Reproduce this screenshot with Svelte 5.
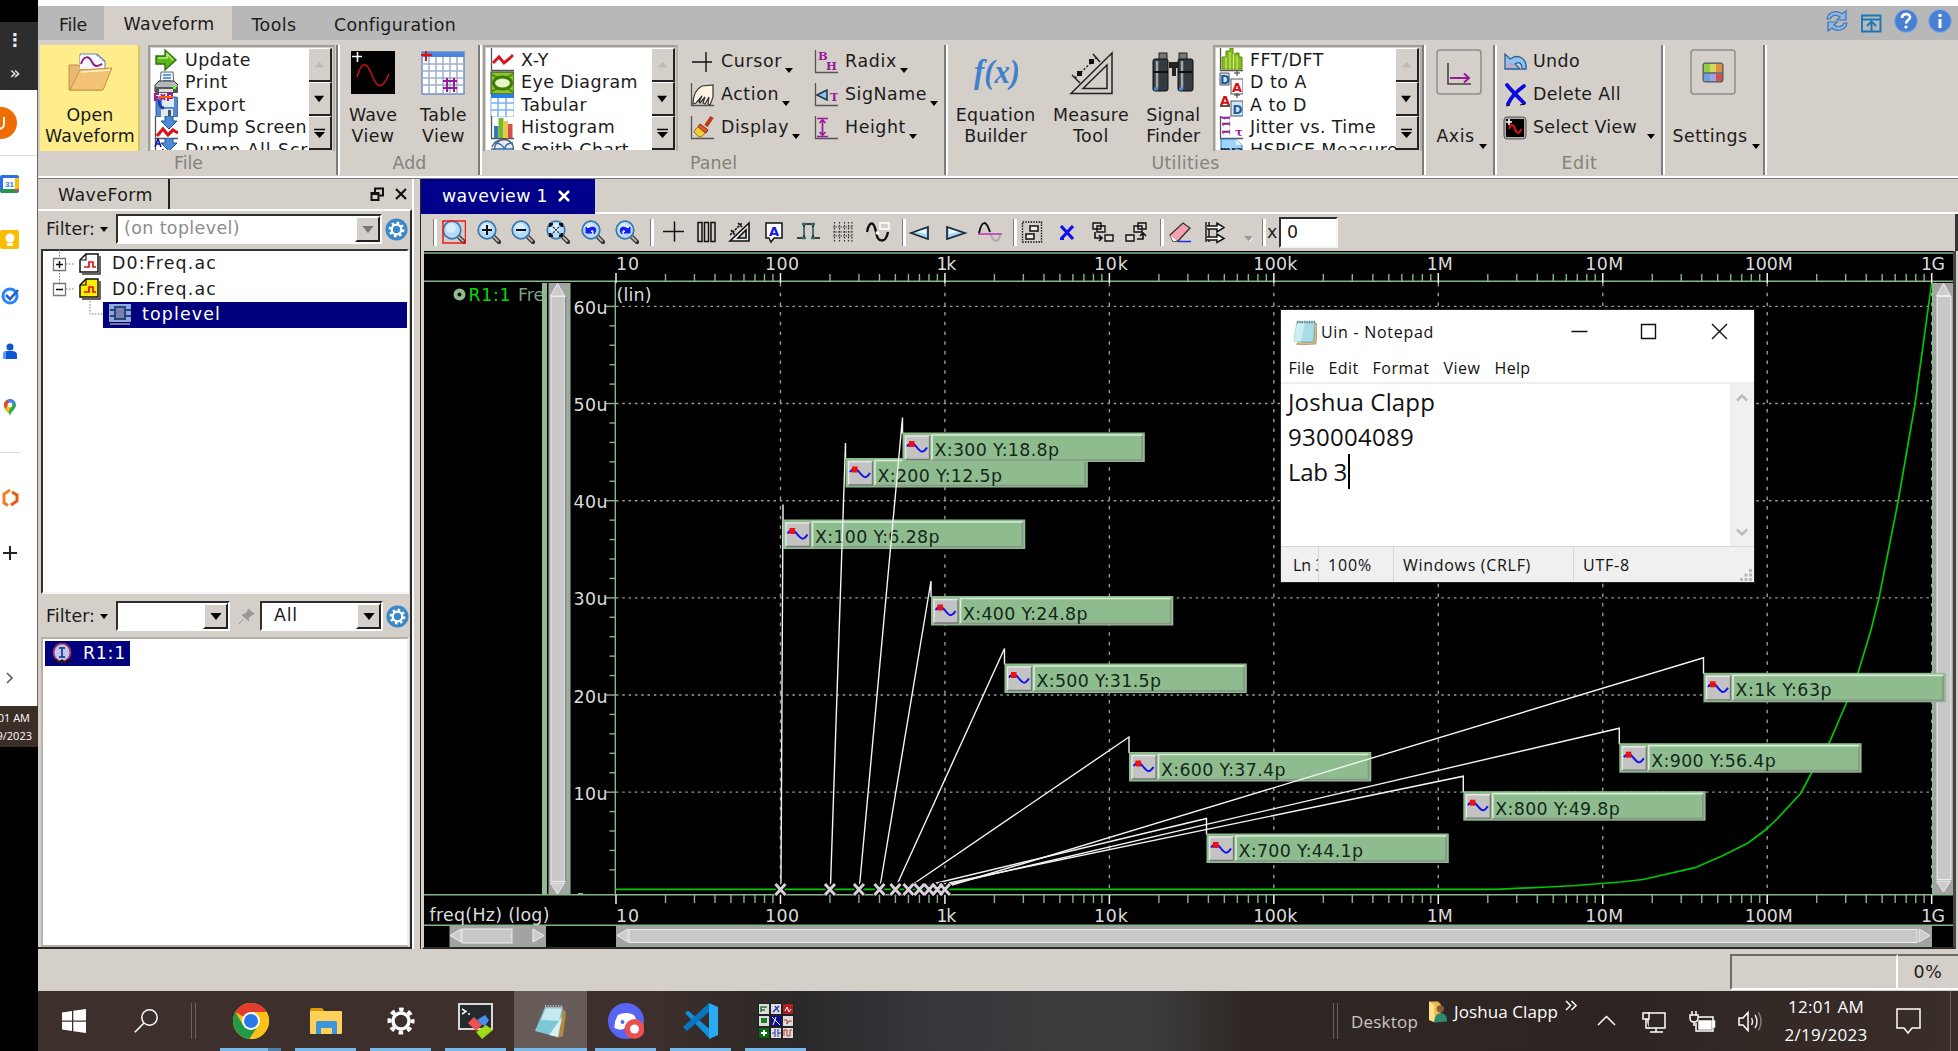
<script>
  // Stretches or tightens a label's tracking so that it fills the given width.
  function fit(node, width) {
    if (!width) return;
    const natural = node.getBoundingClientRect().width;
    node.style.letterSpacing = (width - natural) / node.textContent.length + 'px';
  }

  const axes = '<path d="M1.5 0V22.5H24" fill="none" stroke="#555" stroke-width="1.3"/>';
  const lens = '<path d="M15 15l7 7" stroke="#333" stroke-width="4.4" stroke-linecap="round"/><path d="M15 15l6.5 6.5" stroke="#b5b5b5" stroke-width="1.8"/><circle cx="10" cy="10" r="8.8" fill="#b4dcfa" stroke="#3c78ae" stroke-width="1.7"/><circle cx="9" cy="8" r="5" fill="#d8eefe"/>';
  const icons = {
    update: '<path d="M2 8h9V2l11 10-11 10v-6H2z" fill="#5cb81c" stroke="#2f6d0c" stroke-width="1.4"/><path d="M4 10h9V6l6 6" fill="none" stroke="#b4ec76" stroke-width="1.6"/>',
    print: '<path d="M6 13L7 1h12l1 12z" fill="#e8f3fb" stroke="#667" /><path d="M9 4h8M9 7h8M9 10h8" stroke="#3f7fbf" stroke-width="1.6"/><path d="M1 14l4-4h15l4 4v7H1z" fill="#b5b8b8" stroke="#333"/><rect x="1" y="16" width="23" height="6" rx="1" fill="#555"/><rect x="5" y="18" width="14" height="3" fill="#ddd"/><rect x="19" y="15" width="3" height="3" fill="#6f2"/>',
    export: '<rect x="2" y="4" width="22" height="20" rx="2" fill="#5588cf" stroke="#2d5a9b"/><rect x="8" y="5" width="12" height="9" fill="#dcebf7"/><rect x="7" y="16" width="12" height="8" fill="#e8e8e8"/><rect x="14" y="17" width="3" height="6" fill="#357"/><path d="M5 7c0 6 2 8 5 8" fill="none" stroke="#1c3fb0" stroke-width="3"/><path d="M0 1h5M0 4h4M0 7h5M1 1v6M7 1l4 6M11 1L7 7M14 8V1h4v4h-4" fill="none" stroke="#a0189a" stroke-width="2"/><path d="M5 4h14" stroke="#f60" stroke-width="2"/>',
    dump: axes + '<path d="M3 20l6-7 5 6 5-5 5 3" fill="none" stroke="#d8141c" stroke-width="3.2"/><path d="M11 0h8v5h4l-8 8-8-8h4z" fill="#4b8ad6" stroke="#1f5394"/>',
    dumpall: axes + '<path d="M3 20l6-7 5 6 5-5 5 3" fill="none" stroke="#d8141c" stroke-width="3.2"/><path d="M11 0h8v5h4l-8 8-8-8h4z" fill="#4b8ad6" stroke="#1f5394"/><path d="M1 9L4 1l3 8M2 6h4" fill="none" stroke="#1414a0" stroke-width="1.6"/>',
    xy: axes + '<path d="M3 13l6-6 5 6 5-4 4-4" transform="translate(0 2)" fill="none" stroke="#d8141c" stroke-width="3"/>',
    eye: '<rect x="1" y="1" width="23" height="22" fill="#8ac72c" stroke="#333"/><path d="M1 3l5 3h12l5-3M1 21l5-3h12l5 3" stroke="#4c8d08" stroke-width="2" fill="none"/><ellipse cx="12.5" cy="12" rx="9" ry="6" fill="#e5f5c4" stroke="#3f7c05" stroke-width="3"/>',
    tabular: '<path d="M1 4h23v20H1z" fill="#fff" stroke="#7db3ea"/><path d="M1 10h23M1 17h23M8 4v20M16 4v20" stroke="#7db3ea" stroke-width="1.6"/><path d="M1 1h23v4H1z" fill="#2a7fe0"/>',
    histogram: axes + '<rect x="4" y="10" width="4.5" height="12" fill="#3478b8"/><rect x="8.500" y="2" width="5" height="20" fill="#79b92c"/><rect x="13.500" y="5" width="4.500" height="17" fill="#ecc84a"/><rect x="18" y="8" width="4.500" height="14" fill="#d0504c"/>',
    smith: '<circle cx="14" cy="11" r="9.500" fill="#e3eef8" stroke="#555" stroke-width="1.4"/><path d="M1 11h23M5 5c6 0 9 4 9 6M23 5c-6 0-8 3-8 6M2 9c2-6 6-7 10-7" fill="none" stroke="#3d6f9f" stroke-width="1.5"/>',
    cursor: '<path d="M2 12h20M16 2v20" stroke="#111" stroke-width="1.4"/>',
    action: axes + '<path d="M3 21c0-8 3-15 9-18l11-1v12l-3 8-2-1 1-7-4 7-2-1 2-6-5 6-1-1 3-6-6 7z" fill="#fff3df" stroke="#333" stroke-width="1.2"/>',
    display: axes + '<path d="M22 1l-6 9" stroke="#c03a10" stroke-width="4"/><path d="M10 8l8 6-2 3-8-6z" fill="#e7552a" stroke="#8c2a10"/><path d="M8 11l7 6c-2 3-4 4-6 4l-5-5c1-2 2-4 4-5z" fill="#f4cb3a" stroke="#9b6f0c"/>',
    radix: axes + '<text x="4" y="9.500" class="sf">B</text><text x="12" y="20" class="sf">H</text>',
    signame: axes + '<path d="M3 12l10-5v10z" fill="#8fc3ea" stroke="#1b3550" stroke-width="1.5"/><text x="16" y="18" class="sf">T</text>',
    height: axes + '<path d="M3 2.500h11M3 20.500h11M8.500 4v15M5.500 7l3-3 3 3M5.500 16l3 3 3-3" fill="none" stroke="#9a189a" stroke-width="1.7"/>',
    fft: axes + '<path d="M3 21v-12h4v-6h4v-3h3v6h3v-1h3v4h3v12z" fill="#86bc1c" stroke="#5a8a0a"/><path d="M7 9v12M11 4v17M14.500 6v15M18 8v13" stroke="#d6f08a"/>',
    dta: '<path d="M1 2h9v12H1z" fill="#cfe3f4" stroke="#555"/><text x="1" y="12.500" class="db">D</text><path d="M15 2h6M18 0v5" stroke="#333"/><rect x="12" y="8" width="12" height="15" fill="#fff" stroke="#555"/><text x="13" y="21" class="da">A</text>',
    atd: '<path d="M1 13h10" stroke="#555" stroke-width="2"/><text x="1" y="12" class="da">A</text><path d="M15 2h6M18 0v5" stroke="#333"/><rect x="12" y="8" width="12" height="15" fill="#cfe8fa" stroke="#555"/><text x="13.500" y="21" class="db">D</text>',
    jitter: axes + '<text transform="translate(11 20) rotate(-90)" class="sf">11ſ</text><text x="16" y="20" class="sf">τ</text>',
    hspice: '<path d="M2 1h15l6 6v16H2z" fill="#9ed4f7" stroke="#2a78b8"/><path d="M17 1v6h6z" fill="#e5f5ff"/><text x="1" y="16" class="mr">mra</text>',
    undo: '<path d="M2 4v15h15l-5-5c4-3 7-1 7 5h4c1-10-7-16-16-10z" fill="#8ec4ee" stroke="#2a5f96" stroke-width="1.3"/><path d="M4 15l3-3 4 3-2 3H4z" fill="#c7a2b8"/>',
    delete: '<path d="M4 2c4 5 8 9 17 18M21 3C14 8 8 14 5 21" fill="none" stroke="#0a0ae0" stroke-width="3.800" stroke-linecap="round"/><path d="M17 22l5-1M3 23l4-1" stroke="#111"/>',
    select: '<rect x="1" y="1" width="22" height="22" rx="3" fill="#aaa" stroke="#555"/><rect x="3" y="3" width="18" height="18" fill="#000"/><path d="M6 13c2-7 5-4 6 0s5 6 6 0" fill="none" stroke="#e01010" stroke-width="2"/><path d="M3 6h6M6 3v6" stroke="#fff" stroke-width="1.6"/>',
    zbox: lens + '<rect x="1" y="1" width="22.500" height="22" fill="none" stroke="#f01818" stroke-width="1.500"/>',
    zin: lens + '<path d="M5 10h10M10 5v10" stroke="#111" stroke-width="2"/>',
    zout: lens + '<path d="M5 10h10" stroke="#111" stroke-width="2"/>',
    zfit: lens + '<path d="M5 5l10 10M15 5L5 15" stroke="#222" stroke-width="1.300" stroke-dasharray="2 1"/><path d="M4 7V4h3M13 4h3v3M4 13v3h3M16 13v3h-3" fill="none" stroke="#111" stroke-width="2.200"/>',
    zundo: lens + '<path d="M5 7v6h6l-2-2c3-3 5 0 4 3 4-4 1-10-6-5z" fill="#1a1aee" stroke="#1a1aee"/>',
    zredo: lens + '<path d="M15 7v6H9l2-2c-3-3-5 0-4 3-4-4-1-10 6-5z" fill="#1a1aee" stroke="#1a1aee"/>',
    plus: '<path d="M2 11.500h21M13.500 1.500v20" stroke="#111" stroke-width="1.500"/>',
    bars: '<path d="M4 2.500h4v19H4zM10.500 2.500h4v19h-4zM17 2.500h4v19h-4z" fill="none" stroke="#111" stroke-width="1.500"/>',
    ruler: '<path d="M3 21L22 3v18zM11 18l8-8v8z" fill="#e8e8e8" stroke="#111" stroke-width="1.600" fill-rule="evenodd"/><path d="M3 15L15 3M4 10l4 5M11 3l4 4" fill="none" stroke="#111" stroke-width="1.600" stroke-dasharray="2.500 1"/>',
    abox: '<path d="M4 3h16v15h-8l-3 4-2-4H4z" fill="#fff" stroke="#111" stroke-width="1.500"/><text x="7" y="15.500" class="ab">A</text>',
    pulse: '<path d="M1 18h7V4h9v14h7" fill="none" stroke="#111" stroke-width="1.700"/><path d="M6 4h4M15 4h4M6 18h4M15 18h4" stroke="#2b7070" stroke-width="2.500"/><path d="M8 7v8M17 7v8" stroke="#3f7774" stroke-width="2"/>',
    grid: '<path d="M3.500 2v20M8.500 2v20M13.500 2v20M17.500 2v20M21 2v20" stroke="#333" stroke-width="1.200" stroke-dasharray="1.500 1.500"/><path d="M2 7h20M2 12h20M2 16h20" stroke="#333" stroke-dasharray="1.500 1"/>',
    wave: '<path d="M1 12c2-10 6-11 8-4 2 5 1 11 5 12 5 2 7-3 8-8" fill="none" stroke="#111" stroke-width="2.400"/><path d="M10 12l3 2" stroke="#fff" stroke-width="3"/><rect x="14" y="3" width="9" height="6" fill="none" stroke="#fff" stroke-width="1.500"/>',
    left: '<path d="M3 13L20 7v12z" fill="#a8d4f2" stroke="#16293c" stroke-width="1.700"/><path d="M9 12l9-3v5z" fill="#eef8ff"/>',
    right: '<path d="M21 13L3 7v12z" fill="#a8d4f2" stroke="#16293c" stroke-width="1.700"/><path d="M14 12L5 9v5z" fill="#eef8ff"/>',
    sine: '<path d="M1 13C4 0 8 0 12 12" fill="none" stroke="#111" stroke-width="2"/><path d="M12 13c4 11 9 9 10 2" fill="none" stroke="#aaa" stroke-width="2"/><path d="M0 14h24" stroke="#c22cc0" stroke-width="1.500"/>',
    listbox: '<rect x="2.500" y="2" width="19" height="20" fill="none" stroke="#111" stroke-dasharray="1.500 1.200" stroke-width="1.400"/><path d="M10 6h8v5h-8zM6 14h8v5H6z" fill="#eee" stroke="#111" stroke-width="1.500"/>',
    cross: '<path d="M6 6l12 13M18 6L6 19" stroke="#0c10ee" stroke-width="3.200"/><path d="M5 19h4" stroke="#0c10ee" stroke-width="2"/>',
    copy1: '<path d="M3 3h8v6H3zM7 6h8v6H7zM15 15h8v6h-8z" fill="#ddd" stroke="#111" stroke-width="1.400"/><path d="M5 12v6h7M9 15l3 3-3 3" fill="none" stroke="#111" stroke-width="1.600"/>',
    copy2: '<path d="M13 3h8v6h-8zM9 6h8v6H9zM1 15h8v6H1z" fill="#ddd" stroke="#111" stroke-width="1.400"/><path d="M12 19h6v-6M15 16l3-3 3 3" fill="none" stroke="#111" stroke-width="1.600"/>',
    eraser: '<path d="M2 15L15 3l7 5L10 21H5z" fill="#f4a0b0" stroke="#333" stroke-width="1.300"/><path d="M2 15l7 6H5z" fill="#fff"/><path d="M10 21.500h13" stroke="#1a2af0" stroke-width="1.500"/>',
    arrows: '<path d="M3 2v20M6 2v20" stroke="#111" stroke-width="1.400"/><path d="M4 6h10V3l7 4.500-7 4.500V9H4M4 17h10v-3l7 4.500-7 4v-2.500H4" fill="#fff" stroke="#111" stroke-width="1.500"/>',
    graytri: '<path d="M8 16h9l-4.500 5z" fill="#999"/><path d="M17 17l-4 5" stroke="#fff"/>',
  };

  const mainMenu = [
    { label: 'File', w: 28, cell: 66 }, { label: 'Waveform', w: 91, cell: 128, on: true },
    { label: 'Tools', w: 45, cell: 84 }, { label: 'Configuration', w: 122, cell: 156 },
  ];
  const fileList = [['update', 'Update', 66], ['print', 'Print', 43], ['export', 'Export', 61], ['dump', 'Dump Screen', 122], ['dumpall', 'Dump All Screens', 168]];
  const panelList = [['xy', 'X-Y', 28], ['eye', 'Eye Diagram', 117], ['tabular', 'Tabular', 66], ['histogram', 'Histogram', 94], ['smith', 'Smith Chart', 108]];
  const utilList = [['fft', 'FFT/DFT', 74], ['dta', 'D to A', 57], ['atd', 'A to D', 57], ['jitter', 'Jitter vs. Time', 126], ['hspice', 'HSPICE Measure', 148]];
  const tools = [
    ['|', 9], ['zbox', 35], ['zin', 34], ['zout', 35], ['zfit', 35], ['zundo', 34], ['zredo', 35],
    ['|', 11], ['plus', 33], ['bars', 33], ['ruler', 35], ['abox', 34], ['pulse', 35], ['grid', 35], ['wave', 36],
    ['|', 6], ['left', 36], ['right', 34], ['sine', 35], ['|', 7], ['listbox', 35], ['cross', 35], ['copy1', 35], ['copy2', 35],
    ['|', 8], ['eraser', 35], ['arrows', 33], ['graytri', 26], ['|', 5],
  ];

  // Plot geometry, in page pixels.
  const x0 = 616, decade = 164.46, yZero = 889.3, per10u = 97.15;
  const xOf = (hz) => x0 + (Math.log10(hz) - 1) * decade;
  const decades = ['10', '100', '1k', '10k', '100k', '1M', '10M', '100M', '1G'];
  const labelW = [23, 34, 20, 34, 44, 26, 38, 48, 24];
  const labelX = (i) => (i === 0 ? x0 : i === 8 ? 1921 : x0 + i * decade - labelW[i] / 2 + 1.5);
  const minors = decades.slice(0, 8).flatMap((_, d) => [2, 3, 4, 5, 6, 7, 8, 9].map((m) => xOf(m * 10 ** (d + 1))));
  const levels = [60, 50, 40, 30, 20, 10];
  const yTicks = Array.from({ length: 30 }, (_, i) => i).filter((i) => i % 5).map((i) => yZero - (i * per10u) / 5);
  const markers = [
    { f: 100, t: 'X:100 Y:6.28p', x: 783, y: 519.5 }, { f: 200, t: 'X:200 Y:12.5p', x: 845.5, y: 458 },
    { f: 300, t: 'X:300 Y:18.8p', x: 902.5, y: 432.5 }, { f: 400, t: 'X:400 Y:24.8p', x: 931, y: 596 },
    { f: 500, t: 'X:500 Y:31.5p', x: 1004.5, y: 663.5 }, { f: 600, t: 'X:600 Y:37.4p', x: 1129, y: 752 },
    { f: 700, t: 'X:700 Y:44.1p', x: 1206.5, y: 833.5 }, { f: 800, t: 'X:800 Y:49.8p', x: 1463.3, y: 791.2 },
    { f: 900, t: 'X:900 Y:56.4p', x: 1619.3, y: 743.2 }, { f: 1000, t: 'X:1k Y:63p', x: 1703.5, y: 672.8 },
  ];
  const taskApps = ['chrome', 'explorer', 'gear', 'terminal', 'notepad', 'discord', 'code', 'grid9'];
  const cells9 = ['#ddd', '#ddd', '#b02020', '#ddd', '#0a0a90', '#ddd', '#0a6a10', '#ddd', '#ddd'];
</script>

{#snippet t(text, w)}<span class="t" use:fit={w}>{text}</span>{/snippet}
{#snippet ic(name)}<svg class="ic" viewBox="0 0 24 24">{@html icons[name]}</svg>{/snippet}
{#snippet tri()}<svg class="tri" viewBox="0 0 8 5"><path d="M0 0h8L4 5z" /></svg>{/snippet}

{#snippet gallery(rows, cls)}
  <div class="gallery {cls}">
    <div class="rows">
      {#each rows as [name, text, w]}<div class="row">{@render ic(name)}{@render t(text, w)}</div>{/each}
    </div>
    <div class="spin">
      <svg viewBox="0 0 22 34"><path d="M6 20h10l-5-6z" fill="#bdb9b2" /></svg>
      <svg viewBox="0 0 22 34"><path d="M5 14h11l-5.500 7z" /></svg>
      <svg viewBox="0 0 22 34"><path d="M5 13h12v1.500H5zM5 16.500h12l-6 6.500z" /></svg>
    </div>
  </div>
{/snippet}

{#snippet small(name, text, w)}
  <div class="small">{@render ic(name)}{@render t(text, w)}{@render tri()}</div>
{/snippet}

{#snippet gear()}
  <svg class="gear" viewBox="0 0 24 24"><circle cx="12" cy="12" r="11.500" fill="#3b88c9" /><circle cx="12" cy="12" r="5" fill="none" stroke="#fff" stroke-width="2.400" /><circle cx="12" cy="12" r="7" fill="none" stroke="#fff" stroke-width="2.500" stroke-dasharray="2.600 2.900" /></svg>
{/snippet}

<div class="screen">
  <aside class="strip">
    <div class="s-black"></div>
    <div class="s-dark"><i>⋮</i><b>»</b></div>
    <svg class="s-white" viewBox="0 90 38 616">
      <rect x="37" y="90" width="1" height="616" fill="#75604f" />
      <circle cx="1" cy="123" r="16" fill="#ef6c00" /><path d="M4 117v8a4 4 0 0 1-6 3" fill="none" stroke="#fff" stroke-width="2" />
      <path d="M0 155.500h37M0 452.500h20" stroke="#dadce0" />
      <rect x="0" y="175" width="19" height="18" rx="2" fill="#2f6fe4" /><rect x="15" y="178" width="4" height="11" fill="#fbbc04" /><rect x="1" y="189" width="14" height="4" fill="#1e9a48" /><path d="M15 189h4l-4 4z" fill="#ea4335" /><rect x="3" y="178" width="12" height="11" fill="#fff" /><text x="5" y="187" class="cal">31</text>
      <rect x="0" y="230" width="19" height="19" rx="2" fill="#fbbc04" /><circle cx="10" cy="238" r="4.500" fill="#fff" /><path d="M7 243h6v3H7z" fill="#fff" />
      <circle cx="10" cy="296" r="7" fill="none" stroke="#2684fc" stroke-width="3" /><path d="M6 295l4 4 8-9" fill="none" stroke="#2060d0" stroke-width="2.600" />
      <circle cx="10" cy="347" r="3.500" fill="#0b57d0" /><path d="M3 359v-4q0-4 5-4h4q5 0 5 4v4z" fill="#0b57d0" /><path d="M3 359v-4q0-4 3-4v8z" fill="#5c9bff" />
      <path d="M10 416c-1-5-6-7-6-11a6 6 0 0 1 12 0c0 4-5 6-6 11z" fill="#2ca94f" /><path d="M4 406a6 6 0 0 1 10-5l-8 10z" fill="#ea4335" /><path d="M8 399.500a6 6 0 0 1 7 3l-5 4z" fill="#4285f4" /><path d="M5 409l4-5 2 3-3 6z" fill="#fbbc04" /><circle cx="10" cy="405" r="2.400" fill="#fff" />
      <path d="M10 490l-6 4v9l4 2.500" fill="none" stroke="#f57c1f" stroke-width="3" /><path d="M12 492l5 3v6l-6 4" fill="none" stroke="#e8590c" stroke-width="3" />
      <path d="M3 553h14M10 546v14" stroke="#222" stroke-width="2" />
      <path d="M7 673l5 5-5 5" fill="none" stroke="#5f6368" stroke-width="1.700" />
    </svg>
    <div class="s-clock"><span>12:01 AM</span><span>2/19/2023</span></div>
  </aside>

  <main class="app">
    <header class="menubar">
      {#each mainMenu as m}<div class="mi" class:on={m.on} style:width="{m.cell}px">{@render t(m.label, m.w)}</div>{/each}
      <div class="hicons">
        <svg viewBox="0 0 24 24"><path d="M2 10C3 2 13 1 17 5l4-3v9h-9l3-3C11 5 7 6 5 10z" fill="#8db6e2" stroke="#3f74b5" stroke-width="1.200" /><path d="M22 14c-1 8-11 9-15 5l-4 3v-9h9l-3 3c4 3 8 2 10-2z" fill="#8db6e2" stroke="#3f74b5" stroke-width="1.200" /></svg>
        <svg viewBox="0 0 24 24"><path d="M3 6.500h18.500v16H3zM3 10.500h18.500M12.500 22v-9M8 17l4.500-4.500L17 17" fill="none" stroke="#1878b8" stroke-width="1.900" /></svg>
        <svg viewBox="0 0 24 24"><circle cx="12" cy="12" r="11.500" fill="#4a80d4" stroke="#8db0e8" /><path d="M8 9c0-5 8-5 8-1 0 3-4 3-4 6.500" fill="none" stroke="#fff" stroke-width="2.600" /><circle cx="12" cy="18" r="1.600" fill="#fff" /></svg>
        <svg viewBox="0 0 24 24"><circle cx="12" cy="12" r="11.500" fill="#4a80d4" stroke="#8db0e8" /><path d="M12 10v9" stroke="#fff" stroke-width="3" /><circle cx="12" cy="6.500" r="1.800" fill="#fff" /></svg>
      </div>
    </header>

    <section class="ribbon">
      <div class="group g-file">
        <div class="body">
          <div class="big yellow">
            <svg viewBox="0 0 44 44">
              <path d="M12 3h17l8 7v15H12z" fill="#f4f8ff" stroke="#6d86a8" /><path d="M29 3v7h8z" fill="#a6c3e4" stroke="#6d86a8" />
              <path d="M13 13c3-9 8-8 11-2s6 4 10 2" fill="none" stroke="#951f7c" stroke-width="2" />
              <path d="M1 39V14h9l3 3h20v8L33 39z" fill="#e7ba74" stroke="#c58f40" /><path d="M12 5h17l7 6v7H12z" fill="#f4f8ff" /><path d="M13 13c3-9 8-8 11-2s6 4 10 2" fill="none" stroke="#951f7c" stroke-width="2" /><path d="M2 39L12 19l32-2-9 22z" fill="#f3c478" stroke="#c9913c" /><path d="M13 21l29-2" stroke="#fff0c8" stroke-width="1.500" />
            </svg>
            {@render t('Open', 47)}{@render t('Waveform', 90)}
          </div>
          {@render gallery(fileList, 'gl-file')}
        </div>
        <div class="cap">{@render t('File', 29)}</div>
      </div>
      <div class="group g-add">
        <div class="body">
          <div class="big">
            <svg viewBox="0 0 44 44"><rect width="44" height="43" fill="#000" /><path d="M1 5.500h10M6.500 1v10" stroke="#fff" stroke-width="1.600" /><path d="M6 26c4-14 9-17 14-4s10 20 18 1" fill="none" stroke="#d01010" stroke-width="1.500" /></svg>
            {@render t('Wave', 48)}{@render t('View', 43)}
          </div>
          <div class="big">
            <svg viewBox="0 0 44 44"><rect x="1" y="1" width="42" height="42" fill="#fff" stroke="#6d8fc8" stroke-width="1.500" /><rect x="1" y="1" width="42" height="5" fill="#4f86dd" /><path d="M1 13h42M1 20h42M1 27h42M1 34h42M8 6v37M15 6v37M22 6v37M29 6v37M36 6v37" stroke="#9fb0cf" stroke-width="1.500" /><path d="M26 27v14M33 27v14M22 30h14M22 37h14" stroke="#9a189a" stroke-width="2" /><path d="M0 4h11M5 0v10" stroke="#e01010" stroke-width="2" /></svg>
            {@render t('Table', 47)}{@render t('View', 43)}
          </div>
        </div>
        <div class="cap">{@render t('Add', 34)}</div>
      </div>
      <div class="group g-panel">
        <div class="body">
          {@render gallery(panelList, 'gl-panel')}
          <div class="stack st1">{@render small('cursor', 'Cursor', 61)}{@render small('action', 'Action', 58)}{@render small('display', 'Display', 68)}</div>
          <div class="stack">{@render small('radix', 'Radix', 52)}{@render small('signame', 'SigName', 82)}{@render small('height', 'Height', 61)}</div>
        </div>
        <div class="cap">{@render t('Panel', 47)}</div>
      </div>
      <div class="group g-util">
        <div class="body">
          <div class="big eq"><svg viewBox="0 0 44 44"><text x="0" y="32" class="fx" textLength="46" lengthAdjust="spacingAndGlyphs">f(x)</text></svg>{@render t('Equation', 80)}{@render t('Builder', 63)}</div>
          <div class="big ms"><svg viewBox="0 0 44 44"><path d="M2 42.500L43 2v40.500zM14 37.500L38 14v23.500zM3 24l8 8M24 3l7 8" fill="none" stroke="#222" stroke-width="1.500" /><path d="M6 27L28 6" stroke="#222" stroke-dasharray="2 2" stroke-width="1.500" /><path d="M8 20h5v5H8zM20 8h5v5h-5z" fill="#111" /></svg>{@render t('Measure', 76)}{@render t('Tool', 36)}</div>
          <div class="big sg"><svg viewBox="0 0 44 44"><path d="M18 11h10v6h-3v8h-4v-8h-3z" fill="#222" /><rect x="8" y="2" width="8" height="12" fill="#777" stroke="#222" /><rect x="28" y="2" width="8" height="12" fill="#777" stroke="#222" /><rect x="2" y="8" width="15" height="32" rx="2" fill="#333a40" stroke="#111" /><rect x="27" y="8" width="15" height="32" rx="2" fill="#333a40" stroke="#111" /><path d="M6 10v28M31 10v28" stroke="#a4a8ac" stroke-width="2.500" /><path d="M2 21h15M27 21h15" stroke="#0d0d0d" stroke-width="2" /><path d="M3 38h4M28 38h4" stroke="#3e8ad8" stroke-width="3" /></svg>{@render t('Signal', 54)}{@render t('Finder', 54)}</div>
          {@render gallery(utilList, 'gl-util')}
        </div>
        <div class="cap">{@render t('Utilities', 68)}</div>
      </div>
      <div class="group g-axis">
        <div class="body"><div class="one">
          <svg viewBox="0 0 46 46"><rect x="1" y="1" width="44" height="44" rx="3" fill="none" stroke="#8d8d8d" stroke-width="1.500" /><path d="M12 14v21h23" fill="none" stroke="#444" stroke-width="1.600" /><path d="M14 29h19M28 24.500l5 4.500-5 4.500" fill="none" stroke="#9a189a" stroke-width="2" /></svg>
          <div class="onel">{@render t('Axis', 38)}{@render tri()}</div>
        </div></div>
      </div>
      <div class="group g-edit">
        <div class="body"><div class="stack ed">
          <div class="small">{@render ic('undo')}{@render t('Undo', 47)}</div>
          <div class="small">{@render ic('delete')}{@render t('Delete All', 88)}</div>
          <div class="small sv">{@render ic('select')}{@render t('Select View', 104)}{@render tri()}</div>
        </div></div>
        <div class="cap">{@render t('Edit', 36)}</div>
      </div>
      <div class="group g-set">
        <div class="body"><div class="one">
          <svg viewBox="0 0 46 46"><rect x="1" y="1" width="44" height="44" rx="3" fill="none" stroke="#8d8d8d" stroke-width="1.500" /><rect x="13" y="14" width="20" height="19" rx="2" fill="#777" stroke="#555" /><rect x="14" y="15" width="6" height="8" fill="#8fd040" /><rect x="20" y="15" width="6" height="8" fill="#d4d860" /><rect x="26" y="15" width="6" height="8" fill="#e09040" /><rect x="14" y="25" width="6" height="7" fill="#6aa4e4" /><rect x="20" y="25" width="6" height="7" fill="#a8a0dc" /><rect x="26" y="25" width="6" height="7" fill="#d05050" /></svg>
          <div class="onel">{@render t('Settings', 75)}{@render tri()}</div>
        </div></div>
      </div>
    </section>

    <div class="work">
      <section class="left">
        <div class="ptabs">
          <div class="ptab">{@render t('WaveForm', 95)}</div>
          <svg viewBox="0 0 38 14"><path d="M5 5V1.500h8v7H9M1.500 6h7v7h-7zM1.500 7h7" fill="none" stroke="#111" stroke-width="2" /><path d="M26 2l10 10M36 2L26 12" stroke="#111" stroke-width="2.200" /></svg>
        </div>
        <div class="pbody">
          <div class="filter">{@render t('Filter:', 49)}{@render tri()}
            <div class="combo c1 dis"><span>{@render t('(on toplevel)', 116)}</span><i>{@render tri()}</i></div>{@render gear()}
          </div>
          <div class="tree">
            <svg class="lines" viewBox="0 0 62 76"><path d="M14.500 0v40M21 15h8M21 40h8M45 52v13h14" fill="none" stroke="#777" stroke-dasharray="1.500 1.500" /><path d="M8.500 9.500h12v12h-12zM8.500 34.500h12v12h-12z" fill="#fff" stroke="#777" stroke-width="1.300" /><path d="M11 15.500h7M14.500 12v7M11 40.500h7" stroke="#111" stroke-width="1.500" /></svg>
            {#each ['#fff', '#ffee00'] as fill}
              <div class="trow"><svg viewBox="0 0 22 22"><path d="M3 21h18V3" fill="none" stroke="#333" stroke-width="1.500" /><path d="M7 1h12v18H1V7z" {fill} stroke="#111" stroke-width="1.500" /><path d="M1 7h6V1" fill="none" stroke="#111" stroke-width="1.200" /><path d="M5 14h5V9h4v5h3" fill="none" stroke="#e01010" stroke-width="1.700" /></svg>{@render t('D0:Freq.ac', 105)}</div>
            {/each}
            <div class="trow sel"><svg viewBox="0 0 22 22"><rect width="22" height="18" fill="#8fa9dc" /><rect x="6" y="3" width="10" height="12" fill="#7c80b0" stroke="#26467e" stroke-width="2" /><path d="M1 6h4M1 12h4M17 6h5M17 12h5" stroke="#26467e" stroke-width="2" /><path d="M1 20h20" stroke="#778" stroke-width="2" /></svg>{@render t('toplevel', 79)}</div>
          </div>
          <div class="filter f2">{@render t('Filter:', 49)}{@render tri()}
            <div class="combo c2"><span></span><i>{@render tri()}</i></div>
            <svg class="pin" viewBox="0 0 16 16"><path d="M9 1l6 5-3 1-3 4 1 2-7-6 3-1 3-3zM4 11l-4 5" fill="#999" stroke="#999" /></svg>
            <div class="combo c3"><span>{@render t('All', 24)}</span><i>{@render tri()}</i></div>{@render gear()}
          </div>
          <div class="siglist">
            <div class="sig"><svg viewBox="0 0 22 22"><ellipse cx="11" cy="9.500" rx="8.500" ry="9" fill="#bfc6ee" stroke="#a03060" stroke-width="1.800" /><path d="M8 5h6M11 5v9M8 14h6" stroke="#2c4f98" stroke-width="2" /><path d="M1 20l4-3 3 3 3-3 3 3 3-3 4 3" fill="none" stroke="#111" stroke-width="1.500" /></svg>{@render t('R1:1', 43)}</div>
          </div>
        </div>
      </section>

      <section class="right">
        <div class="vtabs"><div class="vtab">{@render t('waveview 1', 106)}<svg viewBox="0 0 14 14"><path d="M2 2l10 10M12 2L2 12" stroke="#fff" stroke-width="2.500" /></svg></div></div>
        <div class="toolbar">
          {#each tools as [name, w]}
            <div class="cell" style:width="{w}px">{#if name === '|'}<span class="handle"></span>{:else}{@render ic(name)}{/if}</div>
          {/each}
          {@render t('x', 10)}<div class="xin">0</div>
        </div>
        <svg class="plot" viewBox="424 251 1529 696">
          <rect x="424" y="251" width="1530" height="697" fill="#000" />
          <g stroke="#9a9a9a" stroke-width="1.400">
            {#each levels as l}<path d="M616 {yZero - (l / 10) * per10u}H1932" stroke-dasharray="2.500 3.800" />{/each}
            {#each decades.slice(1) as _, i}<path d="M{x0 + (i + 1) * decade} 283V894" stroke-dasharray="3.500 6.200" />{/each}
          </g>
          <g stroke="#86b588" stroke-width="1.400" fill="none">
            <path d="M424 253H1954M424 281.300H1954M424 894.800H1954M424 925.300H1954M615.300 281V895" />
            {#each minors as x}<path d="M{x} 274v7M{x} 895v8" />{/each}
            {#each yTicks as y}<path d="M609.500 {y}h6" />{/each}
            {#each levels as l}<path d="M606 {yZero - (l / 10) * per10u}h10" />{/each}
          </g>
          <g stroke="#f2f2f2" stroke-width="1.500">{#each decades as _, i}<path d="M{x0 + i * decade} 273v10M{x0 + i * decade} 895v9" />{/each}</g>
          <g class="lab">
            {#each decades as d, i}
              <text x={labelX(i)} y="270" textLength={labelW[i]}>{d}</text><text x={labelX(i)} y="921.500" textLength={labelW[i]}>{d}</text>
            {/each}
            {#each levels as l}<text x="573.500" y={yZero + 7.500 - (l / 10) * per10u} textLength="34">{l}u</text>{/each}
            <text x="616.500" y="301" textLength="35">(lin)</text>
            <text x="429.500" y="921" textLength="120">freq(Hz) (log)</text>
          </g>
          <circle cx="459.500" cy="294.500" r="4" fill="none" stroke="#8fbc8f" stroke-width="4" />
          <text x="468.500" y="301" class="r11" textLength="42">R1:1</text><text x="518" y="301" class="fre">Fre</text>
          <rect x="542" y="283" width="5" height="611" fill="#8fbc8f" /><rect x="547" y="283" width="1.500" height="611" fill="#000" />
          <rect x="548.500" y="283" width="20.500" height="611" fill="#a3a3a3" /><rect x="569" y="283" width="1.500" height="611" fill="#8fbc8f" />
          <rect x="551" y="296.500" width="14" height="585" fill="#c8c8c8" stroke="#eee" /><path d="M565.500 297v584" stroke="#808080" />
          <path d="M557.500 283.500l7 12.500h-14zM550.500 883h14l-7 11z" fill="#ccc" stroke="#eee" />
          <rect x="578" y="893" width="5" height="1.500" fill="#8fbc8f" />
          <path d="M616 889.300H1496L1548 887 1576 885.500 1601 883.500 1621 882 1643 879.500 1695 867.700 1722 856 1748 843 1766 829.500 1777 819 1801 793 1812 772 1830 741 1846 704 1858 673 1871 630 1879 598 1898 502 1915 404 1931.500 284" fill="none" stroke="#00c800" stroke-width="1.700" />
          <rect x="1932.500" y="283" width="21.500" height="611" fill="#a3a3a3" /><rect x="1932" y="283" width="1.500" height="611" fill="#8fbc8f" />
          <rect x="1937" y="296.500" width="14" height="583" fill="#c8c8c8" stroke="#eee" /><path d="M1943.500 283.500l7 12h-14zM1936.500 881h14l-7 11z" fill="#ccc" stroke="#eee" />
          <rect x="449.500" y="926" width="96.500" height="22" fill="#a3a3a3" /><rect x="462" y="929" width="50" height="14" fill="#c8c8c8" stroke="#eee" /><path d="M461 929v13l-11-6.500zM533 929v13l11-6.500z" fill="#ccc" stroke="#eee" />
          <rect x="616" y="926" width="1316" height="22" fill="#a3a3a3" /><rect x="629" y="929.500" width="1288" height="13" fill="#c8c8c8" stroke="#eee" /><path d="M628 929v13l-11-6.500zM1919 929v13l11-6.500z" fill="#ccc" stroke="#eee" />
          {#each markers as m}
            <path d="M{m.x} {m.y + 1}v-16L{xOf(m.f) + 0.5} 887" fill="none" stroke="#f4f4f4" stroke-width="1.400" />
            <rect x={m.x} y={m.y} width="242.300" height="29.500" fill="#8fbc8f" />
            <rect x={m.x + 3} y={m.y + 3.500} width="24" height="23.500" fill="#c3c3c3" /><path d="M{m.x + 3} {m.y + 27}v-23.500h24" fill="none" stroke="#e8e8e8" stroke-width="1.500" /><path d="M{m.x + 3} {m.y + 27}h24v-23.500" fill="none" stroke="#777" stroke-width="1.300" />
            <path d="M{m.x + 29.500} {m.y + 27}v-24.500h210" fill="none" stroke="#d8ead8" stroke-width="1.700" /><path d="M{m.x + 29.500} {m.y + 27.500}h210v-24" fill="none" stroke="#889488" stroke-width="1.700" />
            <path d="M{m.x + 4.500} {m.y + 14}c4-5 6-4 10 1s6 6 10 0" fill="none" stroke="#1010ee" stroke-width="2" /><rect x={m.x + 6.500} y={m.y + 8.500} width="5.500" height="6" fill="#f01010" />
            <text x={m.x + 32} y={m.y + 23.500} class="mk" textLength={m.f === 1000 ? 96 : 124.500}>{m.t}</text>
          {/each}
          <g stroke="#000" stroke-width="6">{#each markers as m}<path d="M{xOf(m.f) - 5} 883.500l10 12M{xOf(m.f) + 5} 883.500l-10 12" />{/each}</g>
          <g stroke="#d8cfd8" stroke-width="3">{#each markers as m}<path d="M{xOf(m.f) - 5} 884l10 11M{xOf(m.f) + 5} 884l-10 11" />{/each}</g>
        </svg>
      </section>
    </div>

    <div class="status"><div class="prog"></div><div class="pct">{@render t('0%', 29)}</div></div>

    <footer class="taskbar">
      <svg class="win" viewBox="0 0 24 24"><path d="M0 3.500L10 2v9.500H0zM11.300 1.800L24 0v11.500H11.300zM0 12.700h10V22L0 20.500zM11.300 12.700H24V24l-12.700-1.800z" fill="#fff" /></svg>
      <svg class="mag" viewBox="0 0 24 24"><circle cx="15.500" cy="8.500" r="7.700" fill="none" stroke="#fff" stroke-width="1.500" /><path d="M10 14L.8 23.200" stroke="#fff" stroke-width="1.600" /></svg>
      <span class="dbl"></span>
      <div class="apps">
        {#each taskApps as a}
          <div class="app-btn" class:active={a === 'notepad'}>
            {#if a === 'chrome'}
              <svg viewBox="0 0 36 36"><circle cx="18" cy="18" r="18" fill="#fbc116" /><path d="M18 18L2.400 9A18 18 0 0 1 33.600 9H18z" fill="#e33b2e" /><path d="M2.400 9a18 18 0 0 0 14 26.900L26 22 18 18 10 22z" fill="#229a48" /><path d="M18 9h15.600A18 18 0 0 1 16.400 35.900L26 22z" fill="#fbc116" /><circle cx="18" cy="18" r="9" fill="#fff" /><circle cx="18" cy="18" r="7" fill="#2a78e8" /></svg>
            {:else if a === 'explorer'}
              <svg viewBox="0 0 36 36"><path d="M2 7q0-2 2-2h10l3 4H2z" fill="#d99a08" /><rect x="2" y="8" width="32" height="23" rx="1" fill="#ffd05a" /><path d="M8 31V20q0-2 2-2h17q2 0 2 2v11h-5v-6H13v6z" fill="#3a96dd" /></svg>
            {:else if a === 'gear'}
              <svg viewBox="0 0 36 36"><circle cx="18" cy="18" r="8" fill="none" stroke="#fff" stroke-width="3.400" /><circle cx="18" cy="18" r="11.500" fill="none" stroke="#fff" stroke-width="4" stroke-dasharray="4.500 4.530" stroke-dashoffset="2.200" /></svg>
            {:else if a === 'terminal'}
              <svg viewBox="0 0 36 36"><rect x="1" y="1" width="33" height="25" fill="#26292b" stroke="#d8d8d8" stroke-width="2" /><path d="M4 6l4 2.500L4 11M10 11h2" fill="none" stroke="#fff" stroke-width="1.500" /><path d="M10 20l6-6 8 8-6 6z" fill="#f05050" /><path d="M19 17l8-5 4 5-4 6-4-2z" fill="#4a90f0" /><path d="M18 29l10-7 7 5-11 9z" fill="#9edc14" /></svg>
            {:else if a === 'notepad'}
              <svg viewBox="0 0 36 36"><path d="M30 6l3 3-3 24-6 2z" fill="#b58a45" /><path d="M12 4h18l-5 30L2 28z" fill="#7cc8d6" /><path d="M13 5h16l-3 13L8 17z" fill="#c4e9ee" /><path d="M12 4h18" stroke="#a9b4b4" stroke-width="4" stroke-dasharray="1.200 1.400" /><path d="M16 32l9 2 4-20z" fill="#d8f0f4" /></svg>
            {:else if a === 'discord'}
              <svg viewBox="0 0 36 36"><circle cx="18" cy="18" r="18" fill="#5865f2" /><path d="M10 12q8-4 16 0 4 6 3.500 13-8 4-11.500-1-4 5-11.500 1Q6 18 10 12z" fill="#fff" /><circle cx="14.500" cy="19" r="2" fill="#5865f2" /><circle cx="26.500" cy="26" r="10" fill="#ed5050" /><circle cx="26.500" cy="26" r="4.500" fill="#fff" /></svg>
            {:else if a === 'code'}
              <svg viewBox="0 0 36 36"><path d="M2 10l3-2.500 22 19V36z" fill="#1290dc" /><path d="M0 24L26 0v9L4 28z" fill="#0a74bc" /><path d="M26 0l9 4v28l-9 4z" fill="#2aaaf2" /></svg>
            {:else}
              <svg viewBox="0 0 36 36">
                {#each cells9 as c, i}<rect x={(i % 3) * 12 + .5} y={Math.floor(i / 3) * 12 + .5} width="11" height="11" fill={c} stroke="#222" />{/each}
                <path d="M3 9V4h6M3 7h4" fill="none" stroke="#227a28" stroke-width="1.500" /><path d="M15 9l6-6M17 3l4 6" fill="none" stroke="#2030b0" stroke-width="1.300" /><path d="M27 8l2-4 2 5 2-3" fill="none" stroke="#fff" /><path d="M3 15h6v5H3z" fill="#178022" /><path d="M14 14l8 8M18 14l-3 8" stroke="#fff" /><path d="M26 17h3v4l2-3h3M26 33v-6h3v6h3v-6h2" fill="none" stroke="#c03030" /><path d="M3 30h6M6 27v6" stroke="#fff" stroke-width="2" /><path d="M14 30h3M20 30h3M17 26v8M20 26v8" stroke="#2030b0" />
              </svg>
            {/if}
            <i class:multi={a === 'chrome'}></i>
          </div>
        {/each}
      </div>
      <div class="tray">
        <span class="dbl"></span>
        <span class="desk">{@render t('Desktop', 67)}</span>
        <div class="user">
          <svg viewBox="0 0 22 24"><path d="M0 1h10l3 3v18H0z" fill="#e9b94c" /><path d="M0 1l6 4v19l-6-3z" fill="#ffe08a" /><circle cx="12.500" cy="9" r="4" fill="#8a5c3c" /><path d="M6 24q0-10 7-10t7 9z" fill="#2e8a70" /></svg>
          {@render t('Joshua Clapp', 104)}
          <svg class="chev2" viewBox="0 0 14 12"><path d="M1 1l5 5-5 5M7 1l5 5-5 5" fill="none" stroke="#fff" stroke-width="1.600" /></svg>
        </div>
        <svg class="sys" viewBox="1590 1000 180 40">
          <g fill="none" stroke="#fff" stroke-width="1.500">
            <path d="M1598 1025l8.500-8.500 8.500 8.500" />
            <path d="M1648 1013h17v15h-17zM1650 1032h13M1656 1028v4" /><path d="M1643 1013h6v6h-6zM1646 1019v9h3" fill="#2e2524" />
            <path d="M1698 1017h15v14h-17v-8" /><path d="M1699 1021h12v8h-12zM1713 1021h1.500v6h-1.500z" fill="#fff" /><path d="M1690 1015h8v3q0 4-4 4t-4-4zM1692 1011v4M1696 1011v4M1694 1022v4" fill="#2e2524" />
            <path d="M1739 1018h4l5-5.500v18l-5-5.500h-4z" /><path d="M1751.500 1018q2 3.500 0 7M1755 1015q4 6.500 0 13" opacity=".9" /><path d="M1758.500 1012.500q5 9 0 18" opacity=".4" />
          </g>
        </svg>
        <div class="clock"><span>{@render t('12:01 AM', 76)}</span><span>{@render t('2/19/2023', 83)}</span></div>
        <svg class="note" viewBox="0 0 26 28"><path d="M1 1h23v19h-8l-4 5-4-5H1z" fill="none" stroke="#fff" stroke-width="1.500" /></svg>
        <span class="edge"></span>
      </div>
    </footer>
  </main>

  <div class="notepad">
    <div class="np-title">
      <svg class="npicon" viewBox="0 0 25 25"><path d="M22 3l3 1-1 20-19 1v-2l17-1z" fill="#d9c08a" stroke="#8a7448" stroke-width=".6" /><path d="M5 2h18l-2 20L2 21z" fill="#a8dce6" stroke="#5fa6b4" stroke-width=".6" /><path d="M5 3h8L9 21H2z" fill="#cdeef3" /><path d="M5 2h18" stroke="#5a7c84" stroke-width="2.500" stroke-dasharray="1.200 1.200" /></svg>
      {@render t('Uin - Notepad', 113)}
      <svg class="ctl" viewBox="1560 310 190 44"><path d="M1571.500 331.500h16M1641.500 324.500h14v14h-14zM1712 324l15 15M1727 324l-15 15" fill="none" stroke="#111" stroke-width="1.400" /></svg>
    </div>
    <div class="np-menu">{@render t('File', 26)}{@render t('Edit', 30)}{@render t('Format', 57)}{@render t('View', 37)}{@render t('Help', 36)}</div>
    <div class="np-body">
      <div class="np-text"><p>{@render t('Joshua Clapp', 147)}</p><p>{@render t('930004089', 126)}</p><p>{@render t('Lab 3', 59)}<i></i></p></div>
      <div class="np-scroll"><svg viewBox="0 0 12 9"><path d="M1 7.500l5-5 5 5" /></svg><svg viewBox="0 0 12 9"><path d="M1 1.500l5 5 5-5" /></svg></div>
    </div>
    <div class="np-status">
      <div class="n1">Ln 3</div><div class="n2">{@render t('100%', 44)}</div><div class="n3">{@render t('Windows (CRLF)', 128)}</div><div class="n4">{@render t('UTF-8', 47)}</div>
      <svg viewBox="0 0 12 12"><path d="M9 0h3v3H9zM9 4.500h3v3H9zM9 9h3v3H9zM4.500 4.500h3v3h-3zM4.500 9h3v3h-3zM0 9h3v3H0z" fill="#b8b8b8" /></svg>
    </div>
  </div>
</div>

<style>
  :global(body) { margin: 0; background: #000; }
  .screen { position: relative; width: 1958px; height: 1051px; display: flex; overflow: hidden; background: #000; font: 17.4px/21px "DejaVu Sans", sans-serif; color: #1c1c1c; }
  .screen * { box-sizing: border-box; }
  svg { display: block; flex: none; }
  .t { display: inline-block; white-space: pre; flex: none; }
  .ic { width: 24px; height: 24px; }
  .tri { width: 8px; height: 5px; fill: #000; }
  .screen :global(.sf) { font: bold 11.5px "DejaVu Serif", serif; fill: #9a189a; }
  .screen :global(.db) { font: bold 12px "DejaVu Sans"; fill: #1f5c9c; }
  .screen :global(.da) { font: bold 13px "DejaVu Sans"; fill: #d81010; }
  .screen :global(.ab) { font: bold 13px "DejaVu Sans"; fill: #1414f0; }
  .screen :global(.mr) { font: bold 10.5px "DejaVu Sans"; fill: #10304c; }
  .fx { font: italic bold 34px "Liberation Serif", serif; fill: #3f80cc; }
  .cal { font: bold 8px "Liberation Sans", sans-serif; fill: #3b78e7; }

  .strip { width: 38px; flex: none; display: flex; flex-direction: column; background: #000; overflow: hidden; }
  .s-black { height: 22px; }
  .s-dark { height: 68px; background: #2d2d2d; color: #eee; display: flex; flex-direction: column; align-items: center; padding: 8px 8px 0 0; }
  .s-dark i { font-style: normal; font-weight: bold; line-height: 20px; }
  .s-dark b { font: 18px/20px "DejaVu Sans"; margin-top: 13px; }
  .s-white { width: 38px; height: 616px; background: #fff; }
  .s-clock { height: 41px; background: #3a2e26; color: #fff; font: 11px/18px "Open Sans", sans-serif; display: flex; flex-direction: column; align-items: flex-end; padding: 3px 6px 0 0; white-space: nowrap; }
  .s-clock span:first-child { margin-right: 2px; }

  .app { width: 1920px; flex: none; display: flex; flex-direction: column; background: #d4cfc8; }
  .menubar { height: 40px; border-top: 6px solid #fff; background: #b8b8b8; display: flex; flex: none; }
  .mi { display: flex; justify-content: center; align-items: center; padding: 4px 0 0 2px; }
  .mi.on { background: #d4cfc8; padding-top: 2px; }
  .mi:nth-child(1) { padding-left: 4px; }
  .mi:nth-child(3) { padding-left: 0; }
  .hicons { margin-left: auto; display: flex; gap: 10.500px; padding: 3px 6px 0 0; }
  .hicons svg { width: 24px; height: 24px; }
  .ribbon { height: 138.500px; flex: none; padding-top: 5px; display: flex; border-bottom: 1.500px solid #7d7d7d; box-shadow: inset 0 -2px #fff; }
  .group { height: 130px; display: flex; flex-direction: column; border-right: 2px solid #7d7d7d; box-shadow: 2px 0 #fff; }
  .body { height: 106px; flex: none; display: flex; }
  .cap { display: flex; justify-content: center; color: #85817c; margin-top: 2px; padding-left: 3px; }
  .g-file { width: 300px; } .g-add { width: 142px; } .g-panel { width: 466px; } .g-util { width: 478px; } .g-axis { width: 71px; } .g-edit { width: 168px; } .g-set { width: 102px; }
  .big { width: 72px; display: flex; flex-direction: column; align-items: center; padding-top: 6px; }
  .big svg { width: 44px; height: 44px; margin-bottom: 10px; }
  .yellow { width: 100px; margin-left: 2px; padding-left: 2px; background: #ffec8b; border-right: 2px solid #d8c468; }
  .g-add .big + .big { padding-left: 1px; }
  .g-add .body { padding-left: 0; }
  .eq { width: 96px; margin-left: 2px; } .ms { width: 96px; } .sg { width: 70px; }
  .gallery { height: 106px; display: flex; border: 2px solid #a29e96; border-bottom: 0; border-right-color: #b5b1a9; padding: 1px 1px 0; }
  .gl-file { width: 187px; margin-left: 8px; } .gl-panel { width: 195px; margin-left: 3px; } .gl-util { width: 209px; margin-left: 5px; }
  .rows { flex: 1; min-width: 0; overflow: hidden; background: #fff; padding: 1px 0 0 3px; height: 102px; }
  .gl-panel .rows { padding-left: 4px; }
  .row { display: flex; align-items: center; gap: 7px; height: 22.500px; }
  .spin { width: 23px; display: flex; flex-direction: column; }
  .spin svg { width: 23px; height: 34px; background: #d4cfc8; border-right: 2px solid #222; border-bottom: 2px solid #222; border-top: 1px solid #fff; }
  .stack { width: 124px; display: flex; flex-direction: column; }
  .st1 { margin-left: 12px; }
  .small { height: 33px; display: flex; align-items: center; gap: 7px; }
  .small .tri { margin: 17px 0 0 -4px; }
  .ed { width: 160px; padding-left: 8px; }
  .ed .small { gap: 6px; }
  .sv .tri { margin-left: 4px; }
  .one { width: 100%; display: flex; flex-direction: column; align-items: center; padding-top: 4px; }
  .one svg:not(.tri) { width: 46px; height: 46px; }
  .onel { display: flex; margin-top: 31px; padding-left: 6px; gap: 4px; }
  .onel .tri { margin-top: 18px; }

  .work { height: 770.500px; display: flex; }
  .left { width: 376px; height: 770.500px; border-right: 2px solid #fff; display: flex; flex-direction: column; }
  .ptabs { height: 30.500px; flex: none; display: flex; justify-content: space-between; }
  .ptab { width: 132px; border-right: 2px solid #222; padding: 6px 0 0 20px; }
  .ptabs svg { width: 38px; height: 14px; margin: 8px 4px 0 0; }
  .pbody { flex: 1; border-right: 2.500px solid #2b2b2b; border-bottom: 2px solid #2b2b2b; border-top: 2px solid #fff; display: flex; flex-direction: column; min-height: 0; }
  .filter { height: 38px; flex: none; display: flex; align-items: center; padding: 0 0 2px 8px; }
  .filter > .tri { margin-left: 5px; }
  .combo { display: flex; height: 30px; background: #fff; border: 2px solid; border-color: #2e2e2e #fff #fff #2e2e2e; }
  .combo > span { flex: 1; padding: 2px 0 0 6px; }
  .combo i { width: 25px; display: flex; align-items: center; justify-content: center; background: #d4cfc8; border: 2px solid; border-color: #fff #222 #222 #fff; }
  .combo i .tri { width: 12px; height: 7px; }
  .c1 { width: 266px; margin-left: 8px; } .c2 { width: 114px; margin-left: 8px; } .c3 { width: 123px; margin-left: 5px; }
  .c3 > span { padding-left: 12px; }
  .dis { color: #8c8c8c; }
  .dis .tri { fill: #777; }
  .gear { width: 23px; height: 23px; margin-left: 3px; }
  .pin { width: 16px; height: 16px; margin-left: 9px; }
  .tree { position: relative; height: 345px; flex: none; margin: 0 1px 0 3px; background: #fff; border: 2.500px solid; border-color: #333 #fff #f4f4f4 #333; }
  .lines { position: absolute; left: 2px; top: -2px; width: 62px; height: 76px; }
  .trow { height: 25.500px; display: flex; align-items: center; gap: 11px; padding-left: 36px; }
  .trow svg:not(.lines) { width: 22px; height: 22px; }
  .sel { margin-left: 60px; padding-left: 6px; color: #fff; background: #00007f; }
  .f2 { height: 43px; padding-top: 3px; }
  .siglist { flex: 1; margin: 0 1px 0 3px; background: #fff; border: 2px solid #b5b1a9; border-right-color: #eee; padding: 2px; }
  .sig { width: 85px; height: 25px; background: #00007f; color: #fff; display: flex; align-items: center; gap: 10px; padding-left: 6px; }
  .sig svg { width: 22px; height: 22px; }

  .right { flex: 1; height: 770.500px; margin-left: 6px; border-left: 1.500px solid #2b2b2b; display: flex; flex-direction: column; min-width: 0; }
  .vtabs { height: 35px; flex: none; display: flex; background: linear-gradient(#d4cfc8 32.500px, #fff 32.500px, #fff 34.500px, #d4cfc8 34.500px); }
  .vtab { width: 174px; background: #00008b; color: #fff; display: flex; align-items: center; gap: 9px; padding: 0 0 0 21px; }
  .vtab svg { width: 14px; height: 14px; }
  .toolbar { height: 37.500px; flex: none; display: flex; align-items: center; padding-left: 12px; border-right: 3px solid #333; }
  .cell { flex: none; display: flex; }
  .handle { width: 3.500px; height: 27px; border-left: 1.500px solid #7d7d7d; background: #fff; }
  .xin { width: 59px; height: 31px; margin-left: 2px; background: #fff; border: 2px solid; border-color: #2e2e2e #f4f4f4 #f4f4f4 #2e2e2e; padding: 3px 0 0 6px; }
  .plot { width: 1534px; height: 698px; margin-left: 1px; border-left: 2px solid #d4cfc8; border-right: 3px solid #444; border-bottom: 2px solid #2b2b2b; }
  .lab text { font-size: 17.400px; fill: #dcdcdc; }
  .r11 { font-size: 17.400px; fill: #00dc00; }
  .fre { font-size: 17.400px; fill: #7f9f7f; }
  .mk { font-size: 17.400px; fill: #14281a; }

  .status { height: 42px; flex: none; display: flex; justify-content: flex-end; padding-top: 5px; }
  .prog { width: 168px; height: 36px; border: 2.500px solid; border-color: #6e6a64 #fff #fff #6e6a64; }
  .pct { width: 60px; height: 36px; border-top: 2px solid #6e6a64; border-bottom: 2px solid #fff; display: flex; justify-content: center; padding-top: 6px; }

  .taskbar { height: 60px; flex: none; display: flex; align-items: flex-start; color: #fff; font-family: "Open Sans", sans-serif; background: linear-gradient(90deg, #3d302c 0, #3d2f2b 620px, #2a2829 760px, #35353b 880px, #3c3c3e 1030px, #3b3a3b 1120px, #2f2724 1210px, #2e2523 1600px, #3a2e28 1920px); }
  .win { width: 24px; height: 24px; margin: 18px 0 0 24px; }
  .mag { width: 24px; height: 24px; margin: 18px 0 0 48px; }
  .dbl { width: 5px; height: 36px; margin-top: 12px; border: solid #6b605b; border-width: 0 1.500px; flex: none; }
  .taskbar > .dbl { margin-left: 33px; }
  .apps { display: flex; margin-left: 18px; gap: 2px; }
  .app-btn { width: 73px; height: 60px; display: flex; flex-direction: column; align-items: center; justify-content: space-between; padding-top: 12px; }
  .app-btn svg { width: 36px; height: 36px; }
  .app-btn i { width: 61px; height: 3px; background: #76b9ed; }
  .app-btn i.multi { background: linear-gradient(90deg, #76b9ed 48px, #4d80a8 48px); }
  .app-btn.active { background: #675c58; }
  .app-btn.active i { width: 73px; }
  .tray { margin-left: auto; display: flex; }
  .desk { color: #ccc5c1; font-size: 17px; margin: 20px 0 0 13px; }
  .user { display: flex; font-size: 17px; margin: 9px 0 0 11px; }
  .user > svg:first-child { width: 20px; height: 23px; margin-right: 5px; }
  .user .t { margin-top: 1px; }
  .user .chev2 { width: 13px; height: 11px; margin-left: 7px; }
  .sys { width: 180px; height: 40px; margin: 9px 0 0 12px; }
  .clock { width: 86px; margin: 5px 0 0 13px; font-size: 17px; line-height: 21px; display: flex; flex-direction: column; align-items: center; gap: 7px; }
  .note { width: 26px; height: 28px; margin: 17px 0 0 27px; }
  .edge { height: 60px; margin: 0 7px 0 28px; border-left: 1.500px solid #6b605b; }

  .notepad { position: absolute; left: 1281px; top: 309.500px; width: 473px; height: 272.500px; background: #fff; outline: 1px solid #222; color: #111; font-family: "Open Sans", sans-serif; font-size: 16px; display: flex; flex-direction: column; }
  .np-title { height: 45px; flex: none; display: flex; align-items: center; padding-left: 11px; gap: 4px; }
  .npicon { width: 25px; height: 25px; }
  .ctl { width: 190px; height: 44px; margin-left: auto; margin-right: 4px; }
  .np-menu { height: 29px; flex: none; display: flex; align-items: center; gap: 14px; padding: 1px 0 0 7.500px; border-bottom: 2px solid #eee; }
  .np-body { flex: 1; display: flex; min-height: 0; }
  .np-text { flex: 1; font-size: 24px; line-height: 35px; padding-left: 7px; }
  .np-text p { margin: 0; display: flex; }
  .np-text i { width: 1.500px; height: 35px; background: #000; margin-left: 1px; }
  .np-scroll { width: 24px; background: #f0f0f0; display: flex; flex-direction: column; justify-content: space-between; align-items: center; padding: 9px 0; }
  .np-scroll svg { width: 12px; height: 9px; fill: none; stroke: #bbb; stroke-width: 2.500px; }
  .np-status { height: 36px; flex: none; display: flex; background: #f0f0f0; border-top: 1px solid #d7d7d7; line-height: 36px; align-items: stretch; }
  .np-status div { border-left: 1px solid #d7d7d7; padding-left: 9px; white-space: nowrap; overflow: hidden; }
  .np-status .n1 { width: 37px; padding-left: 12px; border: 0; } .n2 { width: 75px; } .n3 { width: 180px; } .n4 { flex: 1; }
  .np-status svg { width: 12px; height: 12px; margin: 22px 2px 0 0; }
</style>
